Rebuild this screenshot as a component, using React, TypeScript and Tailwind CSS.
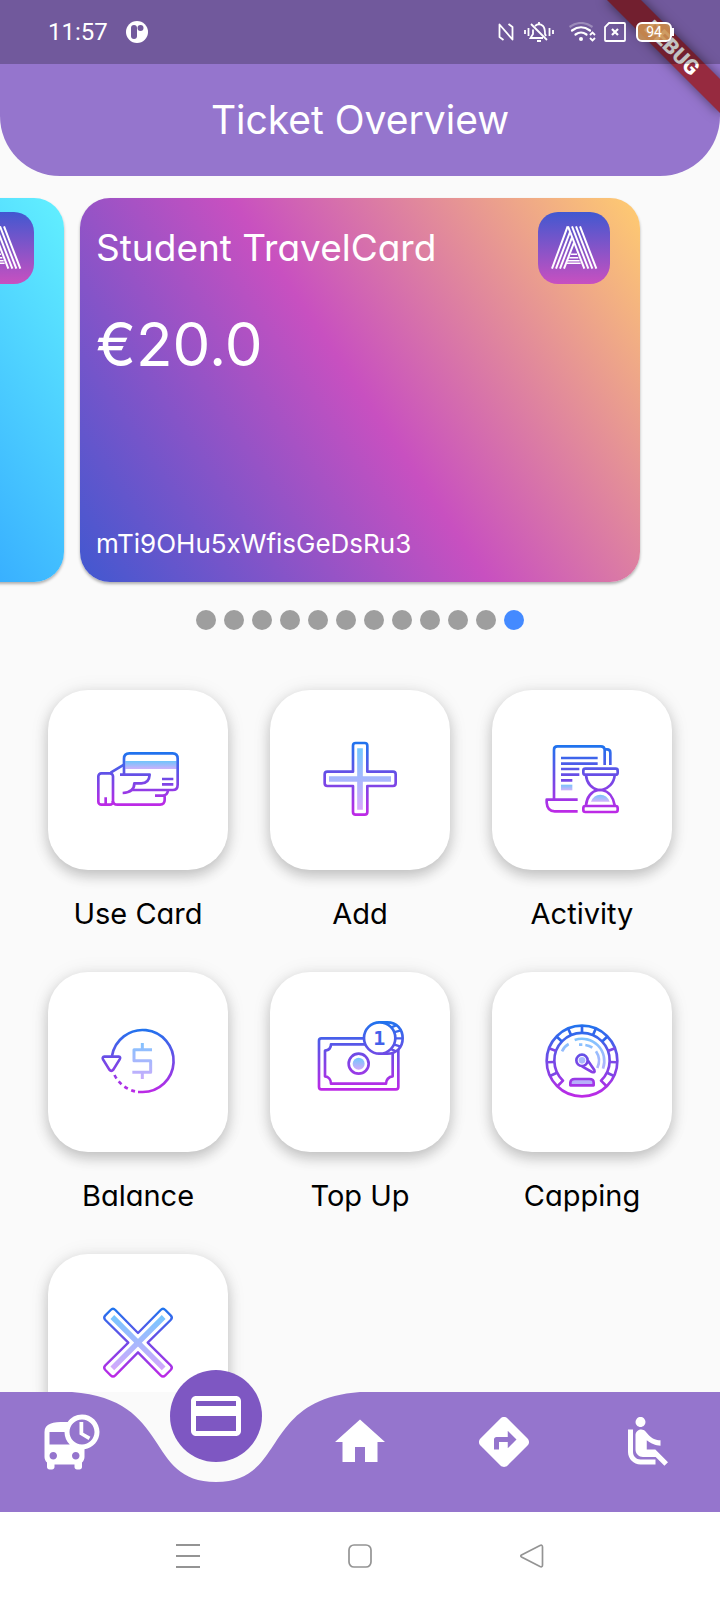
import type { ReactNode } from "react";
import {
  MdAirlineSeatReclineNormal,
  MdCreditCard,
  MdDepartureBoard,
  MdDirections,
  MdHome,
} from "react-icons/md";

/* ---------- Gradient line icons ---------- */

type LineIconProps = {
  id: string;
  x: number;
  y: number;
  top: number;
  bottom: number;
  children: ReactNode;
};

function LineIcon({ id, x, y, top, bottom, children }: LineIconProps) {
  return (
    <svg viewBox={`${x} ${y} 288 288`} className="size-24" fill="none" aria-hidden="true">
      <defs>
        <linearGradient id={`${id}-line`} gradientUnits="userSpaceOnUse" x1="0" x2="0" y1={top} y2={bottom}>
          <stop offset="0" stopColor="#1f74ee" />
          <stop offset="0.45" stopColor="#6a4de6" />
          <stop offset="1" stopColor="#be29e6" />
        </linearGradient>
        <linearGradient id={`${id}-soft`} gradientUnits="userSpaceOnUse" x1="0" x2="0" y1={top} y2={bottom}>
          <stop offset="0" stopColor="#6acbff" />
          <stop offset="1" stopColor="#e2a4fb" />
        </linearGradient>
      </defs>
      <g stroke={`url(#${id}-line)`} strokeWidth="8" strokeLinejoin="round">
        {children}
      </g>
    </svg>
  );
}

function UseCardIcon() {
  return (
    <LineIcon id="use" x={180} y={186} top={248} bottom={406}>
      <defs>
        <linearGradient id="use-band" x1="0" x2="0" y1="0" y2="1">
          <stop offset="0" stopColor="#6fc4fb" />
          <stop offset="1" stopColor="#ccb0fb" />
        </linearGradient>
      </defs>
      <rect x="286" y="273" width="154" height="24" fill="url(#use-band)" stroke="none" />
      <path d="M282 312V266Q282 250 298 250H428Q443 250 443 266V344Q443 360 428 360H307" />
      <path d="M270 314H359C358 330 350 340 334 340H313C313 358 302 368 278 369" />
      <path d="M396 327H430M396 343H430" />
      <rect x="205" y="310" width="44" height="94" rx="9" />
      <path d="M227 382V404M242 308L282 284" />
      <path d="M248 392Q250 404 262 404H390Q404 403 404 390V379M375 377H398Q413 376 414 360" />
    </LineIcon>
  );
}

function AddIcon() {
  return (
    <LineIcon id="add" x={156} y={186} top={217} bottom={436}>
      <path d="M300 235V419M207 327H393" stroke="url(#add-soft)" strokeWidth="17" />
      <path d="M287 219H314Q322 219 322 227V305H399Q407 305 407 313V340Q407 348 399 348H322V426Q322 434 314 434H287Q279 434 279 426V348H202Q194 348 194 340V313Q194 305 202 305H279V227Q279 219 287 219Z" />
    </LineIcon>
  );
}

function CloseIcon() {
  return (
    <LineIcon id="close" x={270} y={168} top={205} bottom={412}>
      <path d="M337 231L491 385M491 231L337 385" stroke="url(#close-soft)" strokeWidth="16" />
      <path
        strokeWidth="7"
        d="M346 210L414 279L482 210Q489 203 496 210L512 226Q519 233 512 240L443 308L512 376Q519 383 512 390L496 406Q489 413 482 406L414 337L346 406Q339 413 332 406L316 390Q309 383 316 376L385 308L316 240Q309 233 316 226L332 210Q339 203 346 210Z"
      />
    </LineIcon>
  );
}

function ActivityIcon() {
  return (
    <LineIcon id="act" x={822} y={186} top={227} bottom={428}>
      <defs>
        <linearGradient id="act-block" x1="0" x2="0" y1="0" y2="1">
          <stop offset="0" stopColor="#77c3fb" />
          <stop offset="1" stopColor="#d0b3fb" />
        </linearGradient>
      </defs>
      <path d="M882 388V239Q882 229 892 229H1022Q1034 229 1034 241V285M1034 238H1041Q1051 238 1051 248V285" />
      <path d="M903 264H1013M903 281H1013M903 297H958M903 314H958M903 331H937" />
      <rect x="903" y="344" width="34" height="17" fill="url(#act-block)" stroke="none" />
      <path d="M953 389H860V398Q862 424 884 424H953" />
      <rect x="970" y="296" width="103" height="18" rx="6" />
      <rect x="970" y="408" width="103" height="18" rx="6" />
      <path d="M978 316C980 340 996 356 1014 360H1026C1044 356 1062 340 1064 316" />
      <path d="M978 406C980 382 994 364 1014 360H1026C1046 364 1060 382 1064 406" />
      <path d="M993 395Q1001 374 1021 374Q1041 374 1049 395Z" fill="url(#act-block)" stroke="none" />
    </LineIcon>
  );
}

function BalanceIcon() {
  return (
    <LineIcon id="bal" x={180} y={162} top={206} bottom={400}>
      <path d="M246 288A93 93 0 1 1 338 396H324" />
      <path d="M315 394A93 93 0 0 1 252 342" strokeDasharray="12 11" />
      <path d="M223 290H266Q273 291 269 298L250 329Q244 336 238 329L219 298Q216 291 223 290Z" />
      <path
        d="M366 269H312V302H362V337H307M337 249V269M337 337V357"
        stroke="url(#bal-soft)"
        strokeWidth="9"
      />
    </LineIcon>
  );
}

function TopUpIcon() {
  return (
    <LineIcon id="top" x={156} y={162} top={184} bottom={390}>
      <defs>
        <linearGradient id="top-dot" x1="0" x2="0" y1="0" y2="1">
          <stop offset="0" stopColor="#6fc8fd" />
          <stop offset="1" stopColor="#d2a9fb" />
        </linearGradient>
      </defs>
      <rect x="177" y="235" width="238" height="153" rx="7" />
      <path d="M213 253H398V349C386 350 378 360 378 371H213C213 359 205 350 195 349V272C206 271 213 264 213 253Z" />
      <circle cx="296" cy="311" r="30" />
      <circle cx="296" cy="311" r="18" fill="url(#top-dot)" stroke="none" />
      <path d="M358 187H382C410 187 428 208 428 235C428 262 410 281 382 281H358Z" fill="#fff" />
      <path d="M390 204L408 196M401 217L420 212M405 235H428M401 253L420 259M390 266L408 274" strokeWidth="7" />
      <circle cx="359" cy="234" r="47" fill="#fff" />
      <text
        x="358"
        y="256"
        textAnchor="middle"
        stroke="none"
        fill="#4361ea"
        fontSize="60"
        fontWeight="700"
        fontFamily='"DejaVu Sans Mono", monospace'
      >
        1
      </text>
    </LineIcon>
  );
}

const gaugeTicks = [-115, -92, -69, -46, -23, 0, 23, 46, 69, 92, 115];

function CappingIcon() {
  return (
    <LineIcon id="cap" x={822} y={162} top={194} bottom={412}>
      <circle cx="966" cy="303" r="106" />
      <path d="M893 378L909 362A83 83 0 1 1 1023 362L1039 378" />
      {gaugeTicks.map((angle) => (
        <path
          key={angle}
          d="M966 197V220"
          transform={`rotate(${angle} 966 303)`}
          stroke={Math.abs(angle) < 60 ? "#2f66ec" : "#7d48e6"}
        />
      ))}
      <g stroke="url(#cap-soft)">
        <path d="M944 240A67 67 0 0 1 1029 326" />
        <path d="M1008 274A51 51 0 0 1 1012 324M976 255Q988 257 997 263M957 254H967M906 274Q913 259 926 252" />
      </g>
      <path d="M984 302L1003 330Q1006 339 996 336L966 319" />
      <circle cx="966" cy="301" r="17" fill="#fff" />
      <circle cx="966" cy="301" r="10" fill="#a9b8fb" stroke="none" />
      <path d="M931 376V368Q932 357 944 357H988Q1001 357 1001 368V376Z" fill="#b7b0fa" />
    </LineIcon>
  );
}

/* ---------- Header ---------- */

function NfcIcon() {
  return (
    <svg viewBox="0 0 16 20" className="h-5 w-4" fill="none" stroke="#fff" strokeWidth="1.800" aria-hidden="true">
      <path d="M5.500 18L1.500 15V2.500L14.500 17.500V5L10.500 2" strokeLinejoin="round" />
    </svg>
  );
}

function SilentIcon() {
  return (
    <svg viewBox="0 0 30 20" className="h-5 w-[30px]" fill="none" stroke="#fff" strokeWidth="1.800" aria-hidden="true">
      <path d="M1 8V12M4.500 6V14M25.500 6V14M29 8V12M15 0V2M13 19H17" />
      <path d="M7 2L23 18M9 7.500V12L6.500 16H19M11 4Q15 0.500 19 4Q21 6 21 12L22 14" />
    </svg>
  );
}

function WifiIcon() {
  return (
    <svg viewBox="0 0 27 20" className="h-5 w-7" fill="none" stroke="#fff" strokeWidth="2.200" aria-hidden="true">
      <path d="M1 5Q12.500 -3 24 5" opacity="0.3" />
      <path d="M3.500 8.500Q12.500 2 21.500 8.500M7 12.500Q12.500 8.500 18 12.500" strokeLinecap="round" />
      <circle cx="12.500" cy="17" r="2" fill="#fff" stroke="none" />
      <path d="M21.500 13L24 10.500L26.500 13M21.500 16L24 18.500L26.500 16" strokeWidth="1.800" />
    </svg>
  );
}

function SimIcon() {
  return (
    <svg viewBox="0 0 22 20" className="h-5 w-[22px]" fill="none" stroke="#fff" strokeWidth="1.800" aria-hidden="true">
      <path d="M5 1H20Q21 1 21 2V18Q21 19 20 19H2Q1 19 1 18V5Z" />
      <path d="M8 7L14 13M14 7L8 13" strokeWidth="2.200" />
    </svg>
  );
}

function StatusBar() {
  return (
    <div className="relative z-20 flex h-16 items-center justify-between bg-black/24 pr-[46px] pl-12 text-white">
      <div className="flex items-center gap-[18px]">
        <span className="font-['Roboto',sans-serif] text-2xl leading-8">11:57</span>
        <svg viewBox="0 0 22 22" className="size-[22px]" aria-hidden="true">
          <circle cx="11" cy="11" r="11" fill="#fff" />
          <rect x="5" y="4" width="6" height="14" rx="3" fill="#725a9c" />
          <circle cx="14.500" cy="7" r="3" fill="#725a9c" />
        </svg>
      </div>
      <div className="flex items-center">
        <NfcIcon />
        <span className="ml-2.5 flex"><SilentIcon /></span>
        <span className="ml-3.5 flex"><WifiIcon /></span>
        <span className="ml-2 flex"><SimIcon /></span>
        <span className="ml-2.5 flex items-center">
          <span className="flex h-5 w-9 items-center justify-center rounded-md border-2 border-white bg-[#d09552]/85 font-['Roboto',sans-serif] text-sm leading-4 text-white">
            94
          </span>
          <span className="h-2 w-0.5 bg-white" />
        </span>
      </div>
    </div>
  );
}

function Header() {
  return (
    <header className="relative shrink-0 overflow-hidden bg-[#fafafa]">
      <div className="rounded-b-[60px] bg-[#9575cd]">
        <StatusBar />
        <h1 className="flex h-28 items-center justify-center text-[39px] leading-[48px] text-white">Ticket Overview</h1>
      </div>
      <div className="pointer-events-none absolute top-0 right-0 z-10 size-36 overflow-hidden">
        <div className="absolute top-9 -right-8 flex h-6 w-40 rotate-45 items-center justify-center bg-[#962a3f] font-['Roboto',sans-serif] text-[21px] leading-6 font-black text-white shadow-[0_0_12px_rgba(0,0,0,0.5)]">
          DEBUG
        </div>
      </div>
    </header>
  );
}

/* ---------- Cards ---------- */

function Logo({ id }: { id: string }) {
  return (
    <svg viewBox="0 0 216 216" className="size-[72px] shrink-0" aria-hidden="true">
      <defs>
        <linearGradient id={id} x1="0" x2="0" y1="0" y2="1">
          <stop offset="0" stopColor="#4158d0" />
          <stop offset="1" stopColor="#c850c0" />
        </linearGradient>
      </defs>
      <rect width="216" height="216" rx="60" fill={`url(#${id})`} />
      <g stroke="#fff" strokeWidth="6" fill="none">
        <path d="M42 170L89 43M54 170L96 60M66 170L102 76M78 170L108 92" />
        <path d="M90 43L139 170M102 43L151 170M114 43L163 170M126 43L175 170" />
        <path d="M98 127H117M94 137H121M90 146H125M87 154H128" strokeWidth="4.500" />
      </g>
    </svg>
  );
}

type TravelCardProps = { logoId: string; surface: string; title: string; amount: string; code: string };

function TravelCard({ logoId, surface, title, amount, code }: TravelCardProps) {
  return (
    <article
      className={`flex h-96 w-full shrink-0 flex-col rounded-[30px] pt-3.5 pr-[30px] pb-[18px] pl-4 text-white shadow-[0_2px_3px_rgba(0,0,0,0.3)] ${surface}`}
    >
      <div className="flex items-center justify-between">
        <h2 className="text-[37px] leading-[48px]">{title}</h2>
        <Logo id={logoId} />
      </div>
      <p className="mt-6 text-[60px] leading-[72px]">{amount}</p>
      <p className="mt-auto text-[26px] leading-10">{code}</p>
    </article>
  );
}

const pages = Array.from({ length: 12 }, (_, i) => i);

function Carousel() {
  return (
    <section aria-label="Travel cards">
      <div className="flex justify-end gap-4 overflow-hidden px-20 pt-[22px] pb-7">
        <TravelCard
          logoId="logo-previous"
          surface="bg-[linear-gradient(56deg,#1a6cff_0%,#36acff_58%,#62f0ff_100%)]"
          title=""
          amount=""
          code=""
        />
        <TravelCard
          logoId="logo-student"
          surface="bg-[linear-gradient(56deg,#4158d0_0%,#c850c0_50%,#ffcc70_100%)]"
          title="Student TravelCard"
          amount="€20.0"
          code="mTi9OHu5xWfisGeDsRu3"
        />
      </div>
      <div className="flex justify-center gap-2">
        {pages.map((page) => (
          <button
            key={page}
            type="button"
            aria-label={`Card ${page + 1}`}
            className={`size-5 rounded-full ${page === 11 ? "bg-[#448aff]" : "bg-[#9e9e9e]"}`}
          />
        ))}
      </div>
    </section>
  );
}

/* ---------- Actions ---------- */

const actions = [
  { label: "Use Card", icon: <UseCardIcon /> },
  { label: "Add", icon: <AddIcon /> },
  { label: "Activity", icon: <ActivityIcon /> },
  { label: "Balance", icon: <BalanceIcon /> },
  { label: "Top Up", icon: <TopUpIcon /> },
  { label: "Capping", icon: <CappingIcon /> },
  { label: "", icon: <CloseIcon /> },
];

function ActionGrid() {
  return (
    <section aria-label="Actions" className="grid grid-cols-3 gap-x-[42px] gap-y-[38px] px-12 pt-[60px]">
      {actions.map(({ label, icon }) => (
        <button key={label} type="button" aria-label={label || "Close"} className="flex flex-col items-center text-black">
          <span className="flex aspect-square w-full items-center justify-center rounded-[40px] bg-white shadow-[0_6px_14px_rgba(0,0,0,0.2),0_1px_20px_rgba(0,0,0,0.08)]">
            {icon}
          </span>
          <span className="mt-6 h-10 text-[29px] leading-10">{label}</span>
        </button>
      ))}
    </section>
  );
}

/* ---------- Bottom bars ---------- */

function BottomNav() {
  return (
    <nav aria-label="Main" className="relative h-[120px] shrink-0 bg-[#fafafa] text-white">
      <svg viewBox="0 0 720 120" preserveAspectRatio="none" className="absolute inset-0 size-full" aria-hidden="true">
        <path
          d="M0 0H72C172.800 7.500 144 90 216 90C288 90 259.200 7.500 360 0H720V120H0Z"
          fill="#9575cd"
        />
      </svg>
      <div className="relative grid grid-cols-5 justify-items-center">
        <a href="#departures" aria-label="Departures" className="pt-5">
          <MdDepartureBoard className="size-[60px]" />
        </a>
        <a
          href="#tickets"
          aria-label="Tickets"
          aria-current="page"
          className="-mt-[22px] flex size-[92px] items-center justify-center rounded-full bg-[#7e57c2]"
        >
          <MdCreditCard className="size-[60px]" />
        </a>
        <a href="#home" aria-label="Home" className="pt-5">
          <MdHome className="size-[60px]" />
        </a>
        <a href="#directions" aria-label="Directions" className="pt-5">
          <MdDirections className="size-[60px]" />
        </a>
        <a href="#seats" aria-label="Seats" className="pt-5">
          <MdAirlineSeatReclineNormal className="size-[60px]" />
        </a>
      </div>
    </nav>
  );
}

function SystemNav() {
  return (
    <div className="flex h-[88px] shrink-0 items-center justify-center gap-[148px] bg-white text-[#949494]">
      <button type="button" aria-label="Recent apps">
        <svg viewBox="0 0 24 24" className="size-6" fill="none" stroke="currentColor" strokeWidth="2" aria-hidden="true">
          <path d="M0 1H24M0 12H24M0 23H24" />
        </svg>
      </button>
      <button type="button" aria-label="Home screen">
        <svg viewBox="0 0 24 24" className="size-6" fill="none" stroke="currentColor" strokeWidth="1.700" aria-hidden="true">
          <rect x="1" y="1" width="22" height="22" rx="5" />
        </svg>
      </button>
      <button type="button" aria-label="Back">
        <svg viewBox="0 0 24 24" className="size-6" fill="none" stroke="currentColor" strokeWidth="1.700" aria-hidden="true">
          <path d="M1.500 11L20 1.500Q22.500 0.500 22.500 3V21Q22.500 23.500 20 22.500L1.500 13Q0 12 1.500 11Z" />
        </svg>
      </button>
    </div>
  );
}

export default function App() {
  return (
    <div className="flex h-screen flex-col bg-[#fafafa] font-['Inter',sans-serif] [font-feature-settings:'cv11']">
      <Header />
      <main className="min-h-0 flex-1 overflow-hidden">
        <Carousel />
        <ActionGrid />
      </main>
      <BottomNav />
      <SystemNav />
    </div>
  );
}
